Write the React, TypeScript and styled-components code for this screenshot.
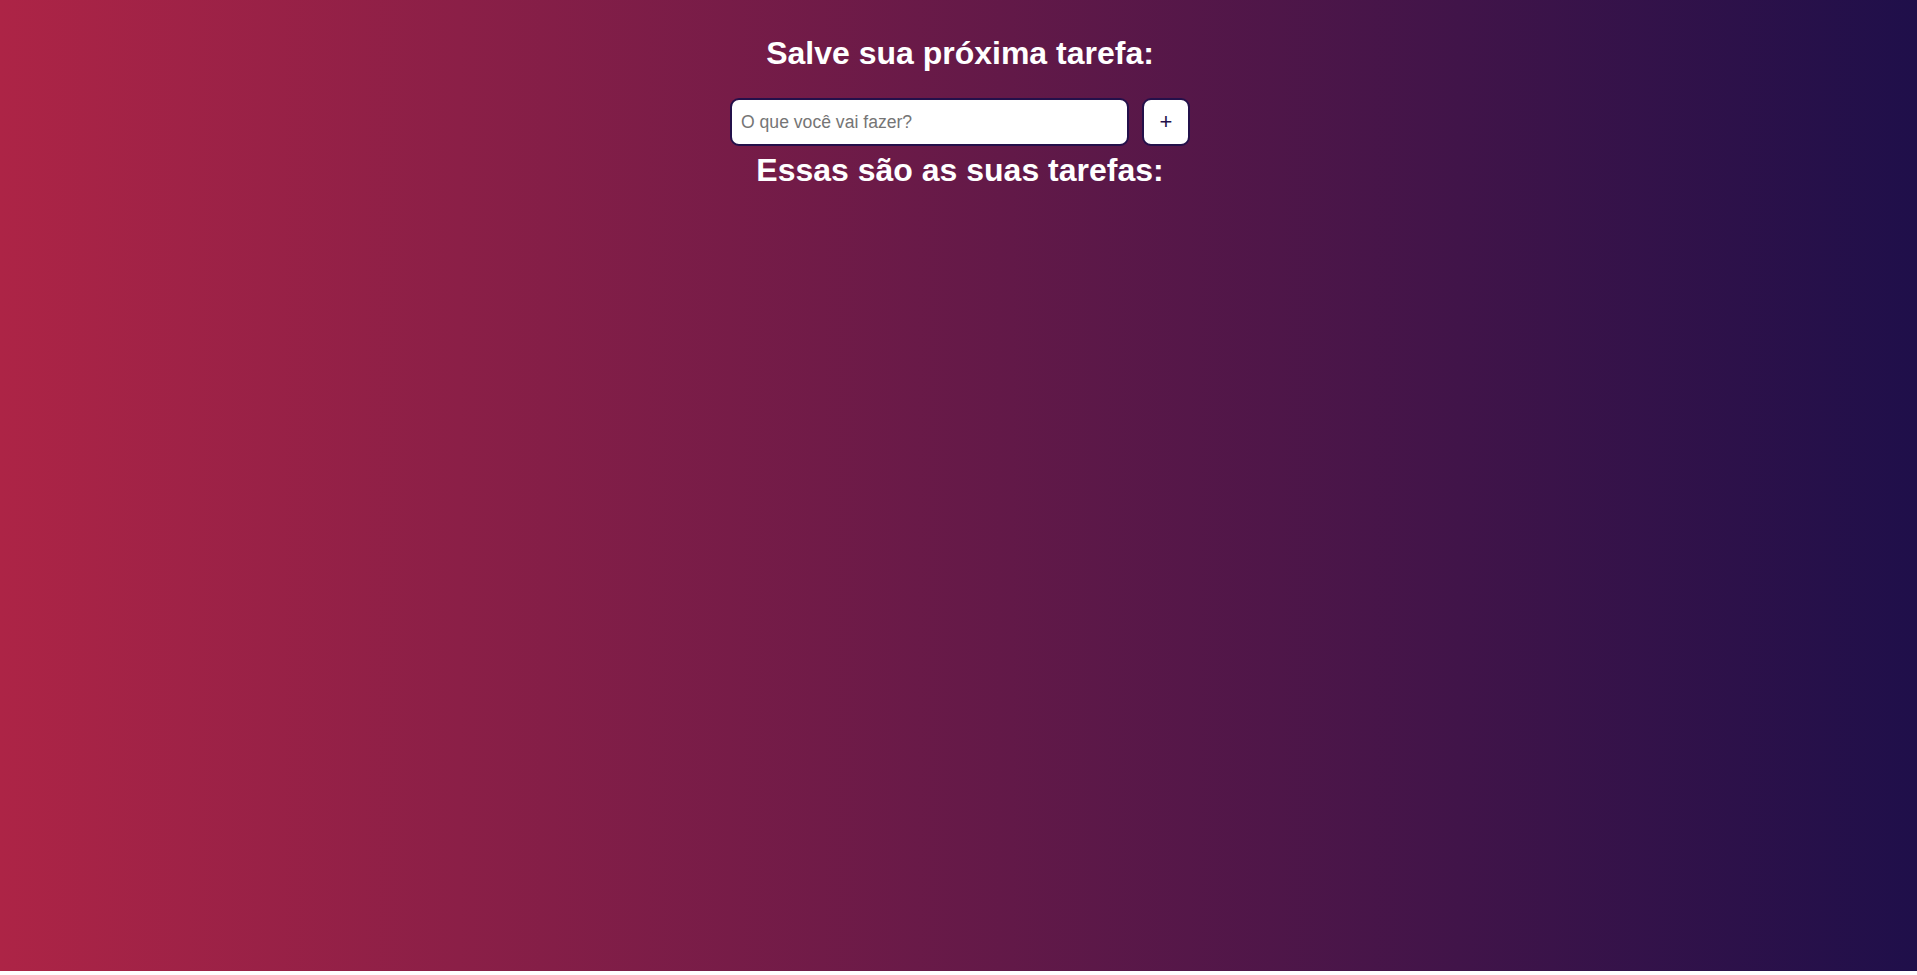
import React, { useState } from "react";
import styled, { createGlobalStyle } from "styled-components";

const Global = createGlobalStyle`
  html, body { margin: 0; padding: 0; background: #ffffff; }
  * { box-sizing: border-box; }
  body { font-family: "Liberation Sans", Arial, sans-serif; }
`;

const Page = styled.main`
  height: 971px;
  background: linear-gradient(to right, #ad2446, #1f0f4a);
  display: flex;
  flex-direction: column;
  align-items: center;
  padding-top: 35px;
  padding-left: 3px;
`;

const Title = styled.h1<{ $top: number }>`
  margin: ${(p) => p.$top}px 0 0;
  font-size: 32px;
  line-height: 36px;
  font-weight: 700;
  color: #ffffff;
`;

const Form = styled.form`
  display: flex;
  gap: 13px;
  margin-top: 27px;
`;

const Input = styled.input`
  width: 399px;
  height: 48px;
  border: 2px solid #24104a;
  border-radius: 9px;
  background: #ffffff;
  padding: 0 9px;
  font-family: "Liberation Sans", Arial, sans-serif;
  font-size: 17.6px;
  color: #222;
  outline: none;
  &::placeholder { color: #757575; }
`;

const AddButton = styled.button`
  width: 48px;
  height: 48px;
  border: 2px solid #24104a;
  border-radius: 9px;
  background: #ffffff;
  color: #24104a;
  font-family: "Liberation Sans", Arial, sans-serif;
  font-size: 22px;
  line-height: 1;
  padding: 0;
  cursor: pointer;
`;

export default function App() {
  const [value, setValue] = useState("");
  return (
    <>
      <Global />
      <Page>
        <Title $top={0}>Salve sua próxima tarefa:</Title>
        <Form onSubmit={(e) => e.preventDefault()}>
          <Input
            placeholder="O que você vai fazer?"
            value={value}
            onChange={(e) => setValue(e.target.value)}
          />
          <AddButton type="submit">+</AddButton>
        </Form>
        <Title $top={6}>Essas são as suas tarefas:</Title>
      </Page>
    </>
  );
}
